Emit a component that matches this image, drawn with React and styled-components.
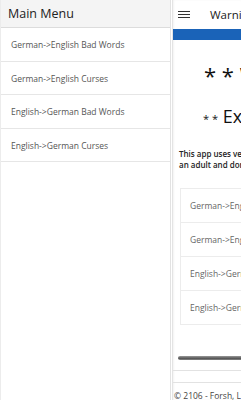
import React from "react";
import styled, { createGlobalStyle } from "styled-components";

const Global = createGlobalStyle`
  html, body {
    margin: 0;
    padding: 0;
    background: #fff;
  }
  body {
    font-family: "Open Sans", "Noto Sans", sans-serif;
    overflow: hidden;
  }
`;

const Page = styled.div`
  display: flex;
  width: 241px;
  height: 400px;
  overflow: hidden;
`;

const Sidebar = styled.aside`
  flex: 0 0 171px;
  height: 400px;
  border-left: 1px solid #ececec;
  border-right: 1px solid #e2e2e2;
  box-sizing: border-box;
  background: #fff;
`;

const SideHeader = styled.div`
  height: 27px;
  line-height: 27px;
  background: #f4f4f4;
  border-bottom: 1px solid #dcdcdc;
  padding-left: 7px;
  font-size: 12.5px;
  color: #222;
`;

const MenuItem = styled.div`
  height: 32.5px;
  line-height: 34px;
  border-bottom: 1px solid #e6e6e6;
  padding-left: 10px;
  font-size: 8.5px;
  color: #555;
`;

const Main = styled.main`
  flex: 1;
  min-width: 0;
  overflow: hidden;
  border-left: 1px solid #e4e4e4;
  margin-left: 1px;
  box-shadow: inset 1px 0 2px rgba(0, 0, 0, 0.05);
`;

const Inner = styled.div`
  width: 360px;
`;

const TopBar = styled.div`
  height: 29px;
  display: flex;
  align-items: center;
  padding-left: 5px;
  gap: 20px;
  font-size: 11.5px;
  color: #222;
`;

const Burger = styled.div`
  display: flex;
  flex-direction: column;
  gap: 1.5px;
  span {
    display: block;
    width: 12px;
    height: 1.5px;
    background: #333;
  }
`;

const BlueBar = styled.div`
  height: 11px;
  background: #1a63b8;
`;

const Heading = styled.h1`
  margin: 22px 0 0 31px;
  font-weight: 400;
  font-size: 22px;
  line-height: 26px;
  color: #111;
`;

const SubHeading = styled.h2`
  margin: 17px 0 0 30px;
  font-weight: 400;
  font-size: 18px;
  line-height: 22px;
  color: #111;
  small {
    font-size: 11px;
  }
`;

const Intro = styled.p`
  margin: 19px 0 0 6px;
  font-size: 8px;
  font-weight: 600;
  line-height: 10.5px;
  color: #222;
`;

const CardList = styled.div`
  margin: 18px 0 0 7px;
  border: 1px solid #ececec;
  border-right: none;
`;

const Card = styled.div`
  height: 33px;
  line-height: 33px;
  padding-left: 9px;
  font-size: 8.5px;
  color: #666;
  border-top: ${(p) => (p.first ? "none" : "1px solid #ececec")};
`;

const ShadowBar = styled.div`
  margin: 31px 0 0 5px;
  height: 4px;
  border-radius: 2px;
  background: linear-gradient(#9a9a9a, #555 60%, #888);
`;

const Rule = styled.div`
  margin-top: ${(p) => p.top}px;
  border-top: 1px solid #e2e2e2;
`;

const Footer = styled.div`
  padding: 7px 0 0 1px;
  font-size: 8.5px;
  color: #444;
`;

const menu = [
  "German->English Bad Words",
  "German->English Curses",
  "English->German Bad Words",
  "English->German Curses",
];

export default function App() {
  return (
    <>
      <Global />
      <Page>
        <Sidebar>
          <SideHeader>Main Menu</SideHeader>
          {menu.map((m) => (
            <MenuItem key={m}>{m}</MenuItem>
          ))}
        </Sidebar>
        <Main>
          <Inner>
            <TopBar>
              <Burger>
                <span />
                <span />
                <span />
              </Burger>
              Warning
            </TopBar>
            <BlueBar />
            <Heading>* * Warning * *</Heading>
            <SubHeading>
              <small>* *</small> Explicit Content <small>* *</small>
            </SubHeading>
            <Intro>
              This app uses very offensive language. Please only use it if you are
              <br />
              an adult and don't mind being exposed to it.
            </Intro>
            <CardList>
              {menu.map((m, i) => (
                <Card key={m} first={i === 0}>
                  {m}
                </Card>
              ))}
            </CardList>
            <ShadowBar />
            <Rule top={10} />
            <Rule top={11} />
            <Footer>© 2106 - Forsh, LLC</Footer>
          </Inner>
        </Main>
      </Page>
    </>
  );
}
